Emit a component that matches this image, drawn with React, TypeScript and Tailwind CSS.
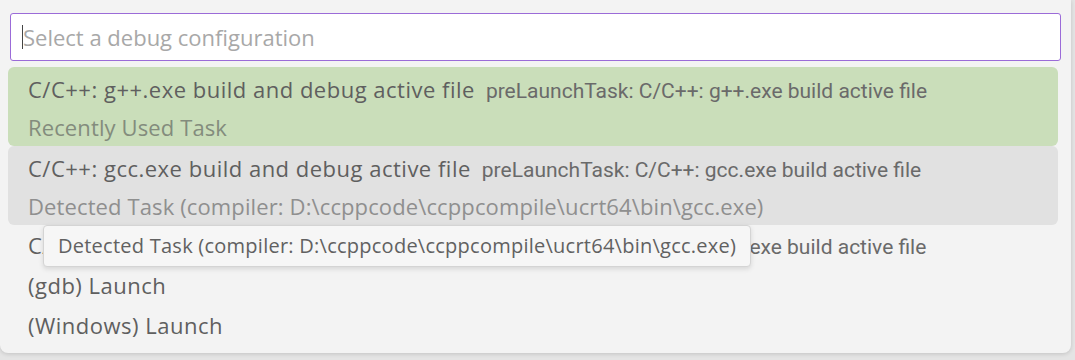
import React from 'react';

const items = [
  {
    label: 'C/C++: g++.exe build and debug active file',
    desc: 'preLaunchTask: C/C++: g++.exe build active file',
    detail: 'Recently Used Task',
    state: 'active',
  },
  {
    label: 'C/C++: gcc.exe build and debug active file',
    desc: 'preLaunchTask: C/C++: gcc.exe build active file',
    detail: 'Detected Task (compiler: D:\\ccppcode\\ccppcompile\\ucrt64\\bin\\gcc.exe)',
    state: 'hover',
  },
  {
    label: 'C/C++: cpp.exe build and debug active file',
    desc: 'preLaunchTask: C/C++: cpp.exe build active file',
    state: 'none',
  },
  { label: '(gdb) Launch', state: 'none' },
  { label: '(Windows) Launch', state: 'none' },
];

export default function App() {
  return (
    <div className="w-[1075px] h-[360px] bg-[#e4e4e4] overflow-hidden" style={{ fontFamily: '"Open Sans", sans-serif' }}>
      <div className="relative w-[1071px] h-[353px] bg-[#f3f3f3] rounded-b-lg shadow-[0_1px_4px_rgba(0,0,0,0.15)] pt-[13px]">
        {/* input */}
        <div className="mx-[10px] h-[48px] bg-white border border-[#9b6bd8] rounded-[3px] flex items-center pl-[11px]">
          <div className="w-px h-[24px] bg-[#444]" />
          <span className="text-[22px] text-[#a8a8a8] leading-none">Select a debug configuration</span>
        </div>

        {/* list */}
        <div className="mt-[6px] px-[8px]">
          {items.map((it) => {
            let bg = '';
            if (it.state === 'active') bg = 'bg-[#cadeba] rounded-md';
            if (it.state === 'hover') bg = 'bg-[#e1e1e1] rounded-md';
            return (
              <div
                key={it.label}
                className={`w-[1050px] px-[20px] ${bg} ${it.detail ? 'h-[79px] pt-[7px]' : 'h-[40px] pt-[5px]'}`}
              >
                <div className="flex items-baseline whitespace-nowrap leading-[30px]">
                  <span className="text-[22px] text-[#5f5f5f] tracking-[0.5px]">{it.label}</span>
                  {it.desc && (
                    <span className="ml-[11px] text-[21px] text-[#6a6a6a]" style={{ fontFamily: 'Roboto, sans-serif' }}>
                      {it.desc}
                    </span>
                  )}
                </div>
                {it.detail && (
                  <div
                    className={`mt-[6px] leading-[30px] text-[22px] tracking-[0.12px] whitespace-nowrap ${
                      it.state === 'active' ? 'text-[#838c7d]' : 'text-[#8f8f8f]'
                    }`}
                  >
                    {it.detail}
                  </div>
                )}
              </div>
            );
          })}
        </div>

        {/* tooltip */}
        <div className="absolute left-[43px] top-[225px] w-[708px] h-[42px] bg-[#f6f6f6] border border-[#d4d4d4] rounded-[4px] shadow-[0_2px_5px_rgba(0,0,0,0.12)] flex items-center pl-[14px]">
          <span className="text-[20px] text-[#616161] whitespace-nowrap leading-none tracking-[0.25px]">
            Detected Task (compiler: D:\ccppcode\ccppcompile\ucrt64\bin\gcc.exe)
          </span>
        </div>
      </div>
    </div>
  );
}
